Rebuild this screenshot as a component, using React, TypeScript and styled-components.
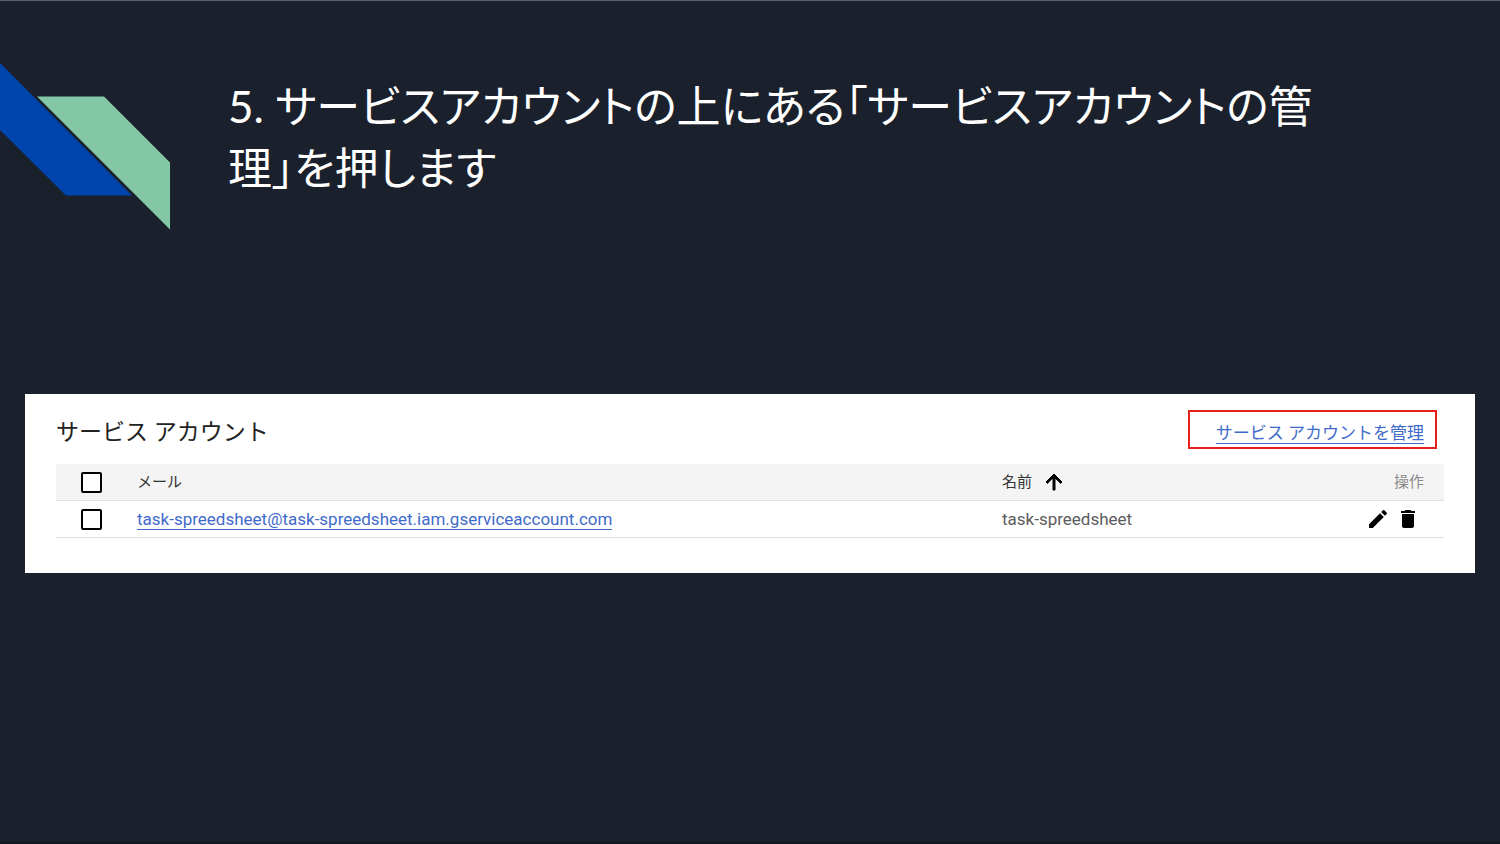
import React from "react";
import styled, { createGlobalStyle } from "styled-components";
import { MdArrowUpward, MdDelete, MdEdit } from "react-icons/md";

const GlobalStyle = createGlobalStyle`
  *, *::before, *::after {
    box-sizing: border-box;
  }
  body {
    margin: 0;
    background: #1b212c;
    font-family: Roboto, "Noto Sans CJK JP", sans-serif;
  }
`;

const Slide = styled.main`
  min-height: 100vh;
  background: #1b212c;
  border-top: 1px solid #57606c;
  border-bottom: 2px solid #121722;
`;

const TitleBar = styled.header`
  display: flex;
  align-items: flex-start;
  gap: 57px;
  padding: 61px 180px 0 0;
`;

const Emblem = styled.svg`
  flex: none;
  width: 171px;
  height: 168px;
`;

const Title = styled.h1`
  margin: 13px 0 0;
  color: #fff;
  font-family: Lato, "Noto Sans CJK JP", sans-serif;
  font-size: 44px;
  font-weight: 400;
  line-height: 62px;
  font-feature-settings: "palt";
`;

const Panel = styled.section`
  margin: 164px 25px 0;
  padding: 16px 31px 35px;
  background: #fff;
`;

const PanelHeader = styled.div`
  display: flex;
  align-items: flex-start;
  justify-content: space-between;
  padding-right: 7px;
  margin-bottom: 8px;
`;

const PanelTitle = styled.h2`
  margin: 0;
  color: #222;
  font-size: 23px;
  font-weight: 400;
  line-height: 46px;
`;

const Highlight = styled.div`
  display: flex;
  justify-content: flex-end;
  align-items: center;
  width: 249px;
  height: 39px;
  padding: 8px 11px 0 0;
  border: 2px solid #e8201c;
`;

const TextLink = styled.a`
  display: inline-block;
  color: #3f6bcb;
  font-size: 17px;
  line-height: 20px;
  text-decoration: none;
  border-bottom: 1px solid #3f6bcb;
`;

const Table = styled.table`
  width: 100%;
  table-layout: fixed;
  border-collapse: separate;
  border-spacing: 0;
`;

const HeadRow = styled.tr`
  background: #f4f4f4;
`;

const cellWidths = { check: "81px", name: "260px", actions: "182px" };

const HeadCell = styled.th<{ $width?: string; $align?: string; $muted?: boolean }>`
  width: ${(p) => p.$width ?? "auto"};
  height: 37px;
  padding: 0 20px 0 0;
  border-bottom: 1px solid #e0e0e0;
  color: ${(p) => (p.$muted ? "#8a8a8a" : "#333")};
  font-size: 15px;
  font-weight: 400;
  line-height: 24px;
  text-align: ${(p) => p.$align ?? "left"};
`;

const Cell = styled.td`
  height: 37px;
  padding: 0 20px 0 0;
  border-bottom: 1px solid #e0e0e0;
  color: #5c5c5c;
  font-size: 17px;
  line-height: 20px;
`;

const CheckBox = styled.input`
  appearance: none;
  display: block;
  width: 21px;
  height: 21px;
  margin: 0 0 0 25px;
  background: #fff;
  border: 2px solid #000;
  border-radius: 2px;
`;

const SortButton = styled.button`
  display: flex;
  align-items: center;
  gap: 10px;
  padding: 0;
  border: 0;
  background: none;
  color: inherit;
  font: inherit;

  svg {
    color: #000;
  }
  path:last-of-type {
    stroke-width: 1;
  }
`;

const Actions = styled.div`
  display: flex;
  justify-content: flex-end;
  gap: 6px;
  padding-right: 4px;
`;

const IconButton = styled.button`
  display: flex;
  padding: 0;
  border: 0;
  background: none;
  color: #000;
`;

const accounts = [
  {
    email: "task-spreedsheet@task-spreedsheet.iam.gserviceaccount.com",
    name: "task-spreedsheet",
  },
];

export default function App() {
  return (
    <>
      <GlobalStyle />
      <Slide lang="ja">
        <TitleBar>
          <Emblem viewBox="0 0 171 168" aria-hidden="true">
            <path d="M0 1 L132 133.500 H66 L0 68 Z" fill="#0044ad" />
            <path d="M37 34.500 H104 L170 100.500 V167.500 Z" fill="#83c7a6" />
          </Emblem>
          <Title>5. サービスアカウントの上にある「サービスアカウントの管理」を押します</Title>
        </TitleBar>
        <Panel>
          <PanelHeader>
            <PanelTitle>サービス アカウント</PanelTitle>
            <Highlight>
              <TextLink href="#manage">サービス アカウントを管理</TextLink>
            </Highlight>
          </PanelHeader>
          <Table>
            <thead>
              <HeadRow>
                <HeadCell $width={cellWidths.check}>
                  <CheckBox type="checkbox" aria-label="すべて選択" />
                </HeadCell>
                <HeadCell>メール</HeadCell>
                <HeadCell $width={cellWidths.name}>
                  <SortButton type="button">
                    名前
                    <MdArrowUpward size={24} />
                  </SortButton>
                </HeadCell>
                <HeadCell $width={cellWidths.actions} $align="right" $muted>
                  操作
                </HeadCell>
              </HeadRow>
            </thead>
            <tbody>
              {accounts.map((account) => (
                <tr key={account.email}>
                  <Cell>
                    <CheckBox type="checkbox" aria-label={account.name} />
                  </Cell>
                  <Cell>
                    <TextLink href="#account">{account.email}</TextLink>
                  </Cell>
                  <Cell>{account.name}</Cell>
                  <Cell>
                    <Actions>
                      <IconButton type="button" aria-label="編集">
                        <MdEdit size={24} />
                      </IconButton>
                      <IconButton type="button" aria-label="削除">
                        <MdDelete size={24} />
                      </IconButton>
                    </Actions>
                  </Cell>
                </tr>
              ))}
            </tbody>
          </Table>
        </Panel>
      </Slide>
    </>
  );
}
